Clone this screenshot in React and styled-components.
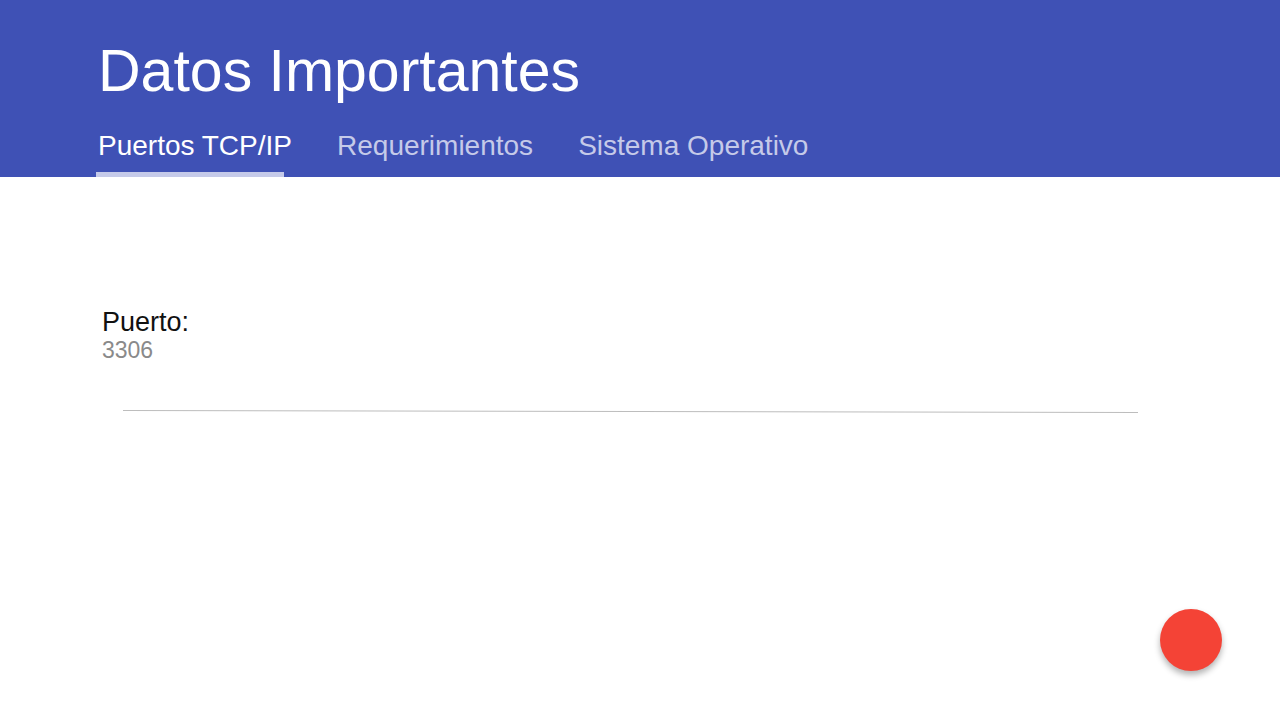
import React from 'react';
import styled, { createGlobalStyle } from 'styled-components';

const GlobalStyle = createGlobalStyle`
  html, body {
    margin: 0;
    padding: 0;
    background: #fff;
    font-family: "Liberation Sans", Arial, sans-serif;
  }
`;

const Page = styled.div`
  width: 1280px;
  height: 720px;
  position: relative;
  overflow: hidden;
  background: #fff;
`;

const Header = styled.header`
  background: #3f51b5;
  height: 177px;
  padding-left: 96px;
  box-sizing: border-box;
  display: flex;
  flex-direction: column;
`;

const Title = styled.h1`
  margin: 0;
  padding: 36px 0 0 2px;
  font-size: 59px;
  font-weight: 400;
  line-height: 70px;
  color: #fff;
`;

const Tabs = styled.nav`
  display: flex;
  margin-top: auto;
  gap: 41px;
`;

const Tab = styled.div`
  position: relative;
  padding: 0 2px 15px 2px;
  font-size: 28px;
  line-height: 32px;
  color: ${(p) => (p.$active ? '#ffffff' : '#c5cae9')};
  ${(p) =>
    p.$active &&
    `
    &::after {
      content: '';
      position: absolute;
      left: 0;
      width: 188px;
      bottom: 0;
      height: 5px;
      background: #c5cae9;
    }
  `}
`;

const Content = styled.main`
  padding: 130px 0 0 102px;
`;

const Label = styled.div`
  font-size: 27px;
  line-height: 30px;
  color: #111;
`;

const Value = styled.div`
  font-size: 23px;
  line-height: 26px;
  color: #8a8a8a;
`;

const Divider = styled.hr`
  margin: 47px 0 0 21px;
  width: 1015px;
  border: none;
  border-top: 1px solid #bdbdbd;
  transform: rotate(0.11deg);
  transform-origin: left center;
`;

const Fab = styled.button`
  position: absolute;
  left: 1160px;
  top: 609px;
  width: 62px;
  height: 62px;
  border: none;
  border-radius: 50%;
  background: #f44336;
  box-shadow: 0 4px 6px rgba(0, 0, 0, 0.3);
  cursor: pointer;
`;

const App = () => {
  return (
    <Page>
      <GlobalStyle />
      <Header>
        <Title>Datos Importantes</Title>
        <Tabs>
          <Tab $active>Puertos TCP/IP</Tab>
          <Tab>Requerimientos</Tab>
          <Tab>Sistema Operativo</Tab>
        </Tabs>
      </Header>
      <Content>
        <Label>Puerto:</Label>
        <Value>3306</Value>
        <Divider />
      </Content>
      <Fab aria-label="Agregar" />
    </Page>
  );
};

export default App;
